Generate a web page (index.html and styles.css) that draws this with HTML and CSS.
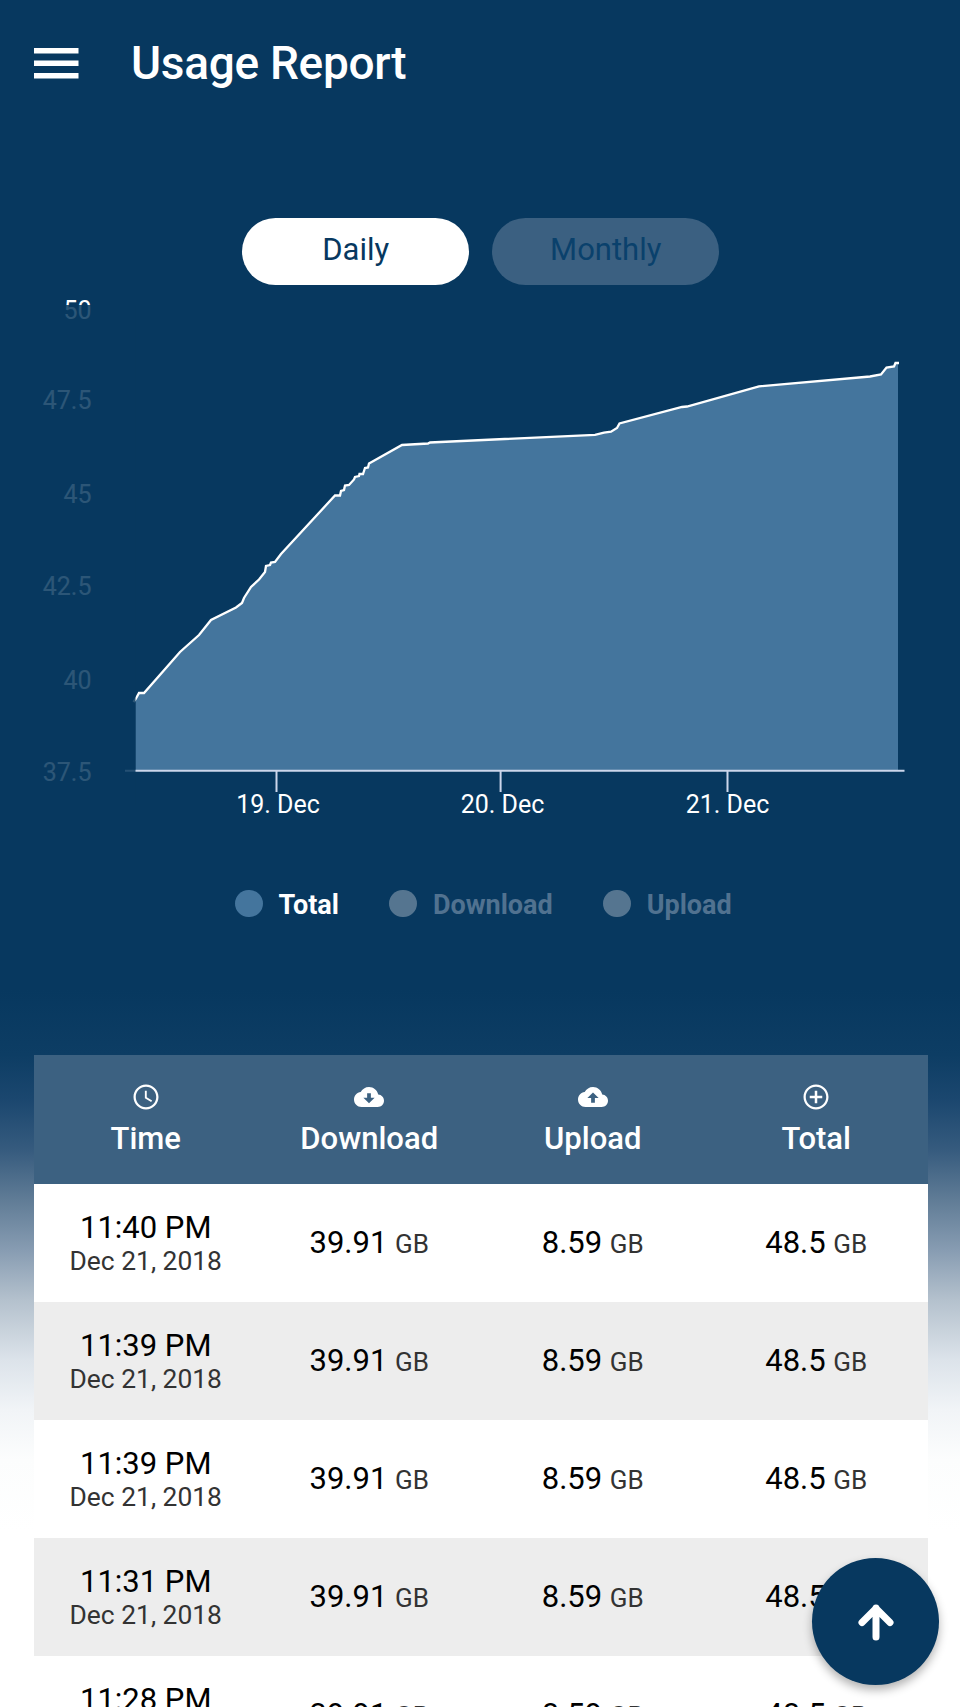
FILE: index.html
```
<!DOCTYPE html>
<html lang="en">
<head>
    <meta charset="UTF-8">
    <meta name="viewport" content="width=device-width, initial-scale=1.0">
    <title>Usage Report</title>
    <link rel="stylesheet" href="styles.css">
</head>
<body>
    <div class="navbar">
        <svg class="menu-icon" width="45" height="31" viewBox="0 0 45 31">
            <path d="M0 0h44.5v5.5H0zM0 12.6h44.5v5.5H0zM0 25h44.5v5.5H0z" fill="#fff"/>
        </svg>
        <h1>Usage Report</h1>
    </div>

    <div class="tabs">
        <button class="tab active">Daily</button>
        <button class="tab">Monthly</button>
    </div>

    <svg class="chart" width="960" height="560" viewBox="0 290 960 560">
        <path class="area" d="M135.500 770V698.500L139 693H144L180 652L199 635L211 620L236 607.500L242 603L244 598L251 587L259 579.500L265 572L266 566L270 565L271 562.500L275 562L281 554L335 495.500H340L341 491L344 490L345 485.500L349 485L354 479.500L355 477L359 476L359.500 474H363L365 468L368 467.500L369 463.500L402 445L428 443.500L430 442.500L595 434.800L604 432.700L611 431.700L617 428L619.500 423.500L682 407L687 406.500L759 386.300L870 376.500L881 374.500L886.500 367.500L894 366.500L895.500 363H898V770Z"/>
        <path class="line" d="M133.500 702L136 698.500L139 693H144L180 652L199 635L211 620L236 607.500L242 603L244 598L251 587L259 579.500L265 572L266 566L270 565L271 562.500L275 562L281 554L335 495.500H340L341 491L344 490L345 485.500L349 485L354 479.500L355 477L359 476L359.500 474H363L365 468L368 467.500L369 463.500L402 445L428 443.500L430 442.500L595 434.800L604 432.700L611 431.700L617 428L619.500 423.500L682 407L687 406.500L759 386.300L870 376.500L881 374.500L886.500 367.500L894 366.500L895.500 363H899"/>
        <path class="axis" d="M125 770.700H904.500M276.500 771V792M500.600 771V792M727.500 771V792"/>
        <g class="y-labels">
            <text x="91.500" y="318.500">50</text>
            <text x="91.500" y="409">47.5</text>
            <text x="91.500" y="502.500">45</text>
            <text x="91.500" y="595">42.5</text>
            <text x="91.500" y="688.500">40</text>
            <text x="91.500" y="780.500">37.5</text>
        </g>
        <rect class="fade" x="0" y="305" width="135.500" height="500"/>
        <g class="x-labels">
            <text x="278" y="812.500">19. Dec</text>
            <text x="502.500" y="812.500">20. Dec</text>
            <text x="727.500" y="812.500">21. Dec</text>
        </g>
    </svg>

    <div class="legend">
        <div class="legend-item on"><span class="dot"></span>Total</div>
        <div class="legend-item"><span class="dot"></span>Download</div>
        <div class="legend-item"><span class="dot"></span>Upload</div>
    </div>

    <div class="table-wrap">
        <div class="table">
            <div class="row head">
                <div class="cell">
                    <svg width="30" height="30" viewBox="0 0 24 24"><path d="M11.990 2C6.470 2 2 6.480 2 12s4.470 10 9.990 10C17.520 22 22 17.520 22 12S17.520 2 11.990 2zM12 20.200c-4.530 0-8.200-3.670-8.200-8.200s3.670-8.200 8.200-8.200 8.200 3.670 8.200 8.200-3.670 8.200-8.200 8.200z"/><path d="M12.600 7h-1.500v6l5 3 .8-1.200-4.300-2.600z"/></svg>
                    <span>Time</span>
                </div>
                <div class="cell">
                    <svg width="30" height="30" viewBox="0 0 24 24"><path d="M19.350 10.040C18.670 6.590 15.640 4 12 4 9.110 4 6.600 5.640 5.350 8.040 2.340 8.360 0 10.910 0 14c0 3.310 2.690 6 6 6h13c2.760 0 5-2.240 5-5 0-2.640-2.050-4.780-4.650-4.960zM16.500 12.500L12 17l-4.500-4.500h3V9h3v3.500h3z"/></svg>
                    <span>Download</span>
                </div>
                <div class="cell">
                    <svg width="30" height="30" viewBox="0 0 24 24"><path d="M19.350 10.040C18.670 6.590 15.640 4 12 4 9.110 4 6.600 5.640 5.350 8.040 2.340 8.360 0 10.910 0 14c0 3.310 2.690 6 6 6h13c2.760 0 5-2.240 5-5 0-2.640-2.050-4.780-4.650-4.960zM13.500 12.700V16.500h-3V12.700h-3L12 8.300l4.500 4.400h-3z"/></svg>
                    <span>Upload</span>
                </div>
                <div class="cell">
                    <svg width="30" height="30" viewBox="0 0 24 24"><path d="M13 7h-2v4H7v2h4v4h2v-4h4v-2h-4V7zm-1-5C6.480 2 2 6.480 2 12s4.480 10 10 10 10-4.480 10-10S17.520 2 12 2zm0 18.200c-4.530 0-8.200-3.670-8.200-8.200s3.670-8.200 8.200-8.200 8.200 3.670 8.200 8.200-3.670 8.200-8.200 8.200z"/></svg>
                    <span>Total</span>
                </div>
            </div>
            <div class="row">
                <div class="cell time">11:40 PM<small>Dec 21, 2018</small></div>
                <div class="cell"><p>39.91 <small>GB</small></p></div>
                <div class="cell"><p>8.59 <small>GB</small></p></div>
                <div class="cell"><p>48.5 <small>GB</small></p></div>
            </div>
            <div class="row">
                <div class="cell time">11:39 PM<small>Dec 21, 2018</small></div>
                <div class="cell"><p>39.91 <small>GB</small></p></div>
                <div class="cell"><p>8.59 <small>GB</small></p></div>
                <div class="cell"><p>48.5 <small>GB</small></p></div>
            </div>
            <div class="row">
                <div class="cell time">11:39 PM<small>Dec 21, 2018</small></div>
                <div class="cell"><p>39.91 <small>GB</small></p></div>
                <div class="cell"><p>8.59 <small>GB</small></p></div>
                <div class="cell"><p>48.5 <small>GB</small></p></div>
            </div>
            <div class="row">
                <div class="cell time">11:31 PM<small>Dec 21, 2018</small></div>
                <div class="cell"><p>39.91 <small>GB</small></p></div>
                <div class="cell"><p>8.59 <small>GB</small></p></div>
                <div class="cell"><p>48.5 <small>GB</small></p></div>
            </div>
            <div class="row">
                <div class="cell time">11:28 PM<small>Dec 21, 2018</small></div>
                <div class="cell"><p>39.91 <small>GB</small></p></div>
                <div class="cell"><p>8.59 <small>GB</small></p></div>
                <div class="cell"><p>48.5 <small>GB</small></p></div>
            </div>
        </div>
    </div>

    <button class="fab" aria-label="Back to top">
        <svg width="44" height="44" viewBox="0 0 44 44">
            <path d="M22 37V8M8 22.500L22 8.500L36 22.500" fill="none" stroke="#fff" stroke-width="7" stroke-linecap="round" stroke-linejoin="round"/>
        </svg>
    </button>
</body>
</html>
```
FILE: styles.css
```
* {
    box-sizing: border-box;
}

body {
    margin: 0;
    height: 1707px;
    overflow: hidden;
    font-family: Roboto, sans-serif;
    background: linear-gradient(#07385f 990px, #0d3d64 1055px, #1b476f 1100px, #365b7e 1150px, #607c96 1200px, #879cb2 1250px, #b4c1cd 1300px, #dce3ea 1360px, #f1f4f7 1410px, #fcfdfd 1460px, #fff 1530px);
}

.navbar {
    display: flex;
    align-items: center;
    height: 126px;
    padding-left: 34px;
    color: white;
}

h1 {
    margin: 0 0 0 52px;
    font-size: 46px;
    font-weight: 500;
    letter-spacing: -0.3px;
}

.tabs {
    display: flex;
    justify-content: center;
    gap: 23px;
    margin-top: 91.5px;
    padding-left: 1.5px;
}

.tab {
    width: 227px;
    height: 67px;
    padding: 0 0 3px;
    border: none;
    border-radius: 34px;
    font-family: inherit;
    font-size: 31px;
    color: #0a416c;
    background: #3b6081;
}

.tab.active {
    color: #07385f;
    background: white;
}

.chart {
    display: block;
    margin-top: 5.5px;
    font-size: 25px;
}

.area {
    fill: #44759d;
}

.line {
    fill: none;
    stroke: white;
    stroke-width: 2.3;
}

.axis {
    fill: none;
    stroke: #ccd6eb;
    stroke-width: 2;
}

.y-labels {
    fill: white;
    text-anchor: end;
}

.x-labels {
    fill: white;
    text-anchor: middle;
}

.fade {
    fill: #07385f;
    opacity: 0.85;
}

.legend {
    display: flex;
    gap: 50.5px;
    height: 54px;
    margin-top: 28px;
    padding-left: 235px;
    font-size: 27px;
    font-weight: bold;
    line-height: 56px;
    color: #517290;
}

.legend-item {
    display: flex;
    align-items: center;
}

.legend-item.on {
    color: white;
}

.dot {
    width: 27.5px;
    height: 27.5px;
    margin: -3px 16px 0 0;
    border-radius: 50%;
    background: #557590;
}

.on .dot {
    background: #44759d;
}

.table-wrap {
    padding: 123px 32px 0 34px;
}

.row {
    display: grid;
    grid-template-columns: repeat(4, 1fr);
    height: 118px;
    background: white;
}

.row:nth-child(odd) {
    background: #ededed;
}

.row.head {
    height: 129px;
    color: white;
    font-weight: 500;
    background: #3c6181;
}

.cell {
    display: flex;
    flex-direction: column;
    align-items: center;
    justify-content: center;
    font-size: 31px;
    line-height: 34px;
}

.cell p {
    margin: 0;
}

.cell small {
    font-size: 26px;
    color: #333;
}

.time {
    padding-top: 2px;
}

.time small {
    font-size: 26.4px;
    line-height: 33px;
}

.head svg {
    fill: white;
    margin: -2px 0 10px;
}

.fab {
    position: fixed;
    right: 21px;
    bottom: 22px;
    width: 127px;
    height: 127px;
    border: none;
    border-radius: 50%;
    background: #07385f;
    box-shadow: 0 5px 10px rgba(0, 0, 0, 0.3);
}

.fab svg {
    display: block;
    margin: auto;
}
```
